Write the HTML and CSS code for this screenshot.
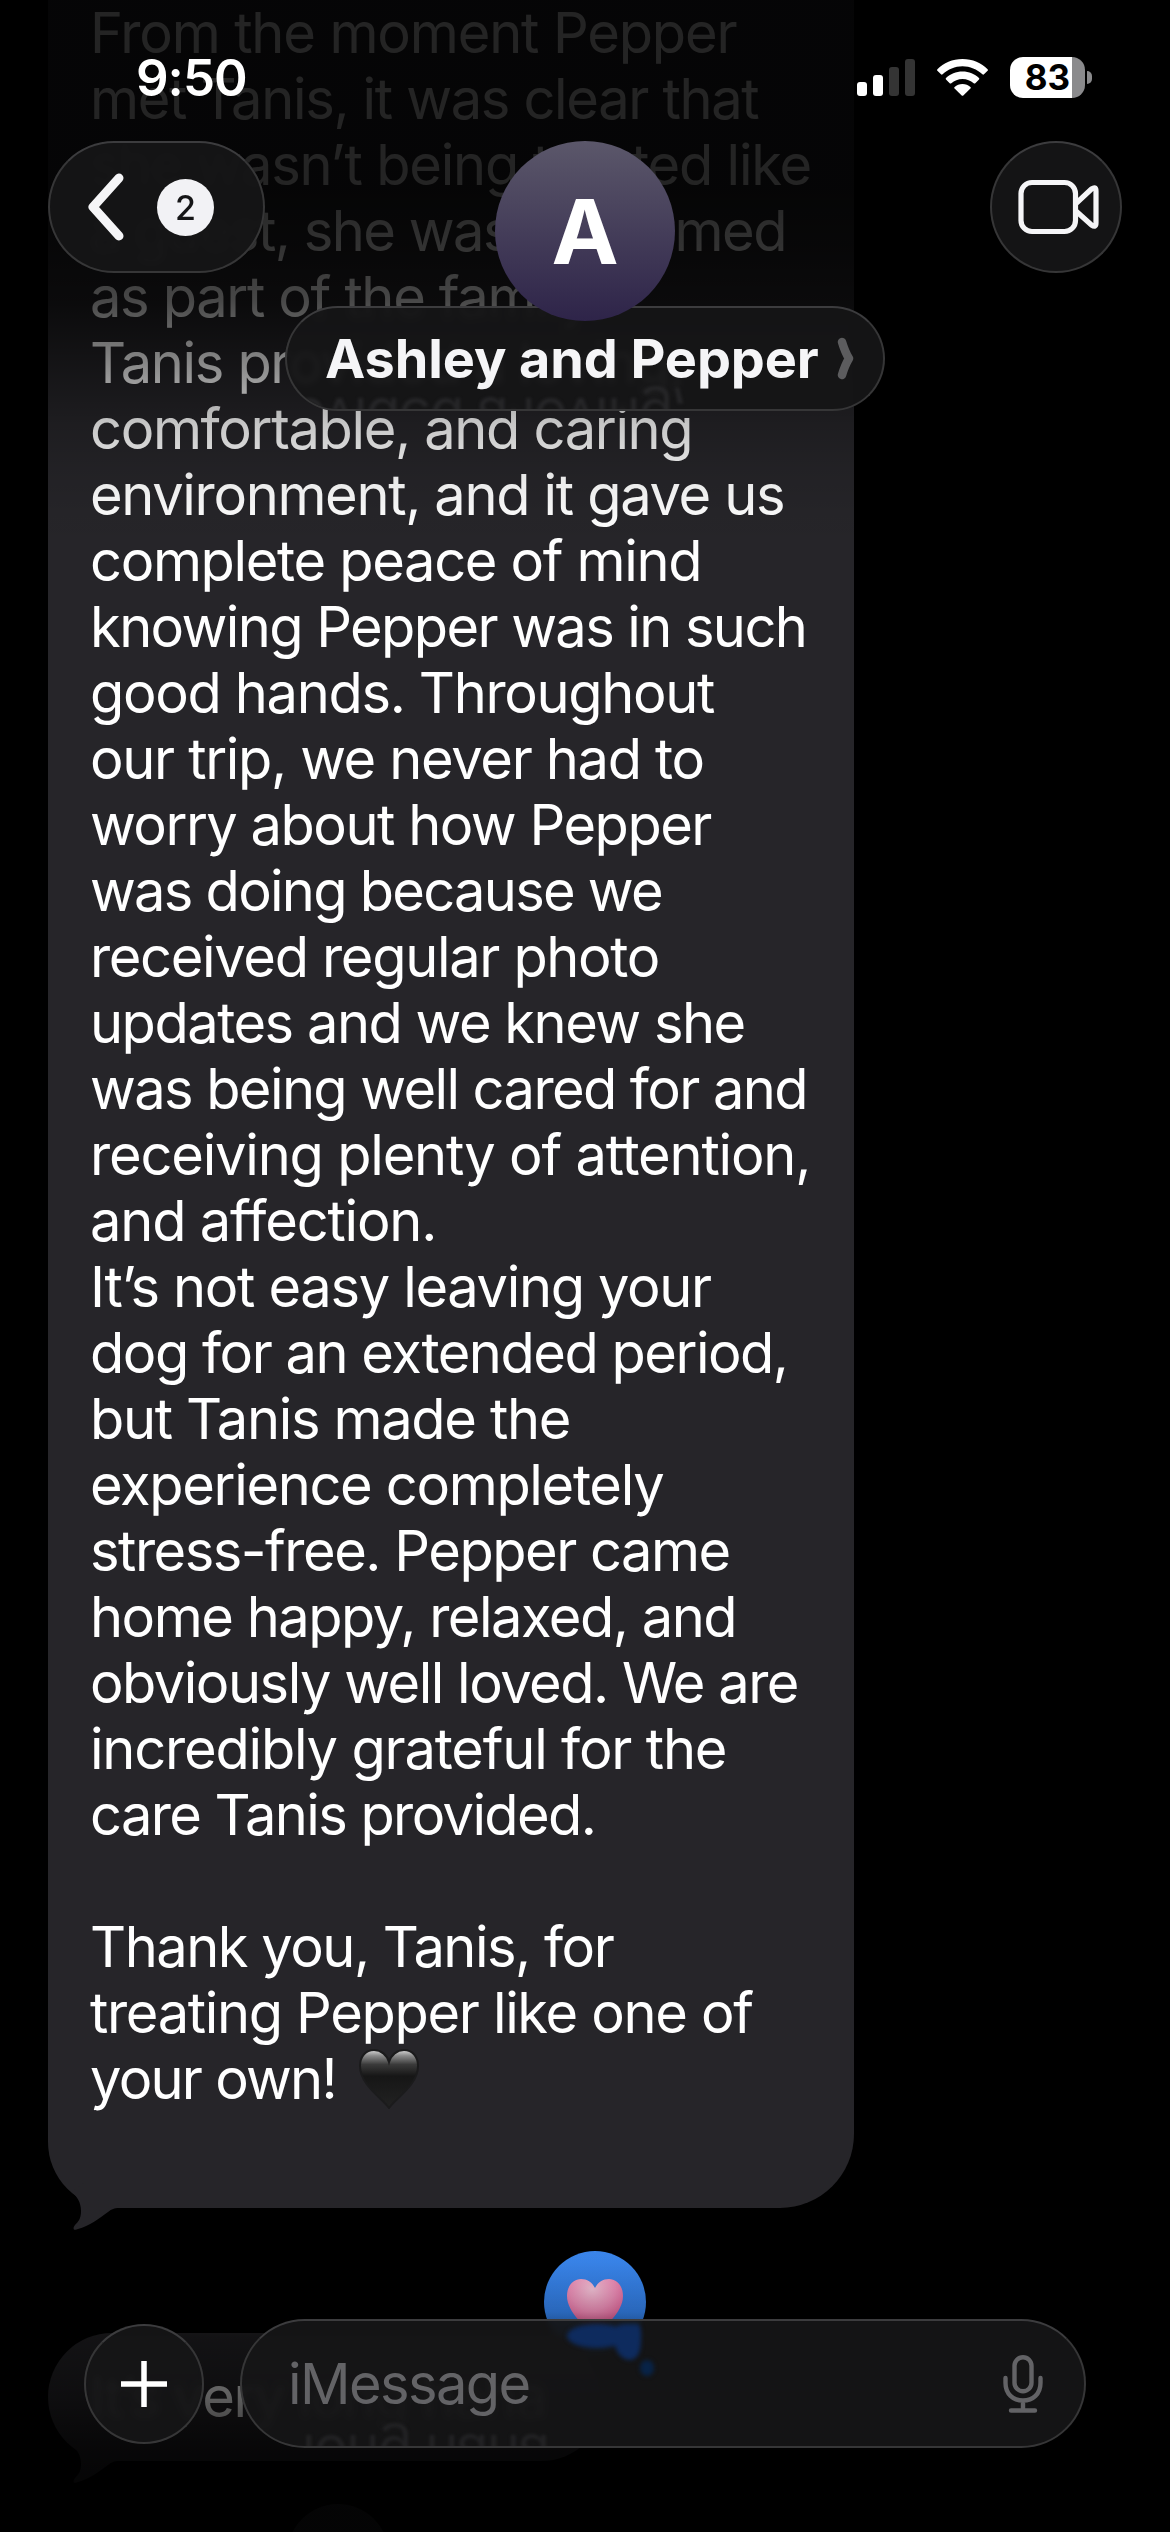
FILE: index.html
```html
<!DOCTYPE html>
<html lang="en">
<head>
<meta charset="utf-8">
<title>Messages</title>
<link rel="stylesheet" href="styles.css">
</head>
<body>
<main class="screen">
  <section class="thread">
    <article class="bubble bubble-long">
      <p class="text">
        <span class="wide">From the moment Pepper</span>
        <span>met Tanis, it was clear that</span>
        <span class="loose">she wasn’t being treated like</span>
        <span class="tight">a guest, she was welcomed</span>
        <span>as part of the family.</span>
        <span>Tanis provided a loving,</span>
        <span>comfortable, and caring</span>
        <span>environment, and it gave us</span>
        <span>complete peace of mind</span>
        <span class="tighter">knowing Pepper was in such</span>
        <span>good hands. Throughout</span>
        <span>our trip, we never had to</span>
        <span class="tight">worry about how Pepper</span>
        <span class="tightest">was doing because we</span>
        <span>received regular photo</span>
        <span class="tight">updates and we knew she</span>
        <span class="tighter">was being well cared for and</span>
        <span class="loose">receiving plenty of attention,</span>
        <span class="loose">and affection.</span>
        <span>It’s not easy leaving your</span>
        <span class="tight">dog for an extended period,</span>
        <span>but Tanis made the</span>
        <span>experience completely</span>
        <span class="tight">stress-free. Pepper came</span>
        <span class="tight">home happy, relaxed, and</span>
        <span class="tight">obviously well loved. We are</span>
        <span class="loose">incredibly grateful for the</span>
        <span class="tighter">care Tanis provided.</span>
        <span class="blank"></span>
        <span class="tight">Thank you, Tanis, for</span>
        <span>treating Pepper like one of</span>
        <span class="tightest">your own!<svg class="heart-dark" viewBox="0 0 60 60"><defs><linearGradient id="hd" x1="0" y1="0" x2="0" y2="1"><stop offset="0" stop-color="#d8d8d8"/><stop offset=".1" stop-color="#8a8a8a"/><stop offset=".25" stop-color="#3a3a3a"/><stop offset=".45" stop-color="#161616"/><stop offset="1" stop-color="#222"/></linearGradient></defs><path d="M30 59C23 49 1 36 1 17C1 7 7 1 15 1C22 1 28 6 30 13C32 6 38 1 45 1C53 1 59 7 59 17C59 36 37 49 30 59Z" fill="url(#hd)" stroke="#1b1b1c" stroke-width="2"/></svg></span>
      </p>
      <svg class="tail" viewBox="0 0 80 50"><path d="M40 0L24 12C29 17 33 22 33 31C33 39 30 42 27 45C24 49 26 51 30 49C41 46 52 38 60 32C64 29 66 28 71 28L80 28V0Z"/></svg>
    </article>
    <div class="reaction-row">
      <div class="reaction">
        <svg viewBox="0 0 56 52"><defs><radialGradient id="hp" cx=".45" cy=".2" r=".8"><stop offset="0" stop-color="#fbc9de"/><stop offset=".5" stop-color="#f594be"/><stop offset="1" stop-color="#e4508e"/></radialGradient></defs><path d="M28 52C20 50 0 34 0 17C0 7 6 0 14 0C20 0 25 3 28 9C31 3 36 0 42 0C50 0 56 7 56 17C56 34 36 50 28 52Z" fill="url(#hp)"/></svg>
      </div>
    </div>
    <article class="bubble bubble-short">
      <p class="text"><span>It’s very long haha</span></p>
      <svg class="tail" viewBox="0 0 80 50"><path d="M40 0L24 12C29 17 33 22 33 31C33 39 30 42 27 45C24 49 26 51 30 49C41 46 52 38 60 32C64 29 66 28 71 28L80 28V0Z"/></svg>
    </article>
    <div class="next-reaction"></div>
  </section>
  <div class="fade fade-top"></div>
  <div class="fade fade-bottom"></div>

  <header class="header">
    <div class="status">
      <time class="clock">9:50</time>
      <svg class="signal" viewBox="0 0 58 38"><rect y="23" width="10" height="14" rx="3" fill="#fff"/><rect x="16" y="16" width="10" height="21" rx="3" fill="#fff"/><rect x="32" y="8" width="10" height="29" rx="3" fill="#343434"/><rect x="48" width="10" height="37" rx="3" fill="#343434"/></svg>
      <svg class="wifi" viewBox="0 0 51 37" fill="#fff"><path d="M25.5 0C35.500 0 44.500 4 50.600 10.200Q51.300 11 50.600 11.800L47 15.300Q46.200 16 45.400 15.300C40 10.300 33 7.300 25.500 7.300S11 10.300 5.600 15.300Q4.800 16 4 15.300L.4 11.800Q-.3 11 .4 10.200C6.500 4 15.500 0 25.500 0Z"/><path d="M25.500 12.500C32 12.500 37.700 15 42 19Q42.700 19.800 42 20.600L38.300 24.200Q37.500 24.900 36.700 24.200C33.700 21.500 29.800 19.900 25.500 19.900S17.300 21.500 14.300 24.200Q13.500 24.900 12.700 24.200L9 20.600Q8.300 19.800 9 19C13.300 15 19 12.500 25.500 12.500Z"/><path d="M25.500 25C28.600 25 31.300 26.100 33.400 28Q34.100 28.700 33.400 29.500L26.300 36.500Q25.500 37.200 24.700 36.500L17.600 29.500Q16.900 28.700 17.600 28C19.700 26.100 22.400 25 25.500 25Z"/></svg>
      <div class="battery"><span>83</span></div>
    </div>
    <div class="nav">
      <button class="glass back"><svg viewBox="0 0 37 68"><path d="M32 5L6 34L32 63" fill="none" stroke="#f5f5f7" stroke-width="9" stroke-linecap="round" stroke-linejoin="round"/></svg><span class="count">2</span></button>
      <div class="contact">
        <div class="avatar">A</div>
        <div class="glass name"><b>Ashley and Pepper</b><svg viewBox="0 0 17 43"><path d="M5 5Q8 15 12 21.500Q8 28 5 38" fill="none" stroke="#5c5c5e" stroke-width="8.500" stroke-linecap="round" stroke-linejoin="round"/></svg></div>
      </div>
      <button class="glass video"><svg viewBox="0 0 82 56" fill="none" stroke="#f5f5f7" stroke-width="5.200" stroke-linejoin="round"><rect x="3" y="3.500" width="54.500" height="49" rx="11"/><path d="M58.500 24L73.500 10Q78 7 78 12V44Q78 49 73.500 46L58.500 32.500"/></svg></button>
    </div>
  </header>

  <footer class="composer">
    <button class="glass plus"><svg viewBox="0 0 46 46"><path d="M23 0V46M0 23H46" stroke="#fff" stroke-width="5.500" stroke-linecap="round"/></svg></button>
    <div class="glass field">
      <svg class="refraction" viewBox="0 0 100 64"><g fill="#0e2b5e"><ellipse cx="35" cy="18" rx="30" ry="12"/><path d="M52 12Q55 5 66 6H76Q80 8 79 22Q79 42 67 42Q54 40 52 22Z"/><ellipse cx="85" cy="50" rx="7" ry="8" fill="#082347"/></g></svg>
      <span class="placeholder">iMessage</span>
      <svg class="mic" viewBox="0 0 40 58" fill="none" stroke="#636366" stroke-width="4.400" stroke-linecap="round"><rect x="11.500" y="2.200" width="17" height="34" rx="8.500"/><path d="M2.500 23V28C2.500 39 10 45.500 20 45.500S37.500 39 37.500 28V23M20 46V55.500M8 55.500H32"/></svg>
    </div>
  </footer>
</main>
</body>
</html>
```
FILE: styles.css
```css
* { box-sizing: border-box; margin: 0; }
body { background: #000; font-family: Inter, "Liberation Sans", sans-serif; color: #fff; }
button { font: inherit; color: inherit; padding: 0; }
svg { display: block; flex: none; }

.screen { position: relative; width: 1170px; height: 2532px; overflow: hidden; background: #000; }

/* conversation */
.thread { display: flex; flex-direction: column; align-items: flex-start; padding-left: 48px; }
.bubble { position: relative; background: #262529; padding-left: 42px; }
.bubble-long { width: 806px; height: 2208px; border-radius: 0 0 74px 66px; }
.bubble-short { width: 557px; height: 128px; padding-top: 31px; border-radius: 64px; }
.text { font-size: 56px; line-height: 66px; letter-spacing: -1.34px; white-space: nowrap; }
.text > span { display: block; height: 66px; }
.text .wide { letter-spacing: -1.15px; }
.text .loose { letter-spacing: -1.2px; }
.text .tight { letter-spacing: -1.49px; }
.text .tighter { letter-spacing: -1.6px; }
.text .tightest { letter-spacing: -1.74px; }
.heart-dark { display: inline-block; width: 60px; height: 60px; margin-left: 23px; vertical-align: -10px; }
.tail { position: absolute; left: 0; bottom: -22px; width: 80px; height: 50px; }
.tail path { fill: #262529; }
.reaction-row { height: 125px; padding: 43px 0 0 496px; }
.reaction { width: 102px; height: 102px; padding: 28px 0 0 23px; border-radius: 50%; background: linear-gradient(#3b87ee, #2f7de6); }
.reaction svg { width: 56px; height: 52px; }
.next-reaction { width: 102px; height: 102px; margin: 43px 0 0 239px; border-radius: 50%; background: #222224; }

/* edge fades over the conversation */
.fade { position: absolute; left: 0; right: 0; }
.fade-top { top: 0; height: 560px; background: linear-gradient(rgba(0,0,0,.86) 0, rgba(0,0,0,.86) 190px, rgba(0,0,0,.8) 250px, rgba(0,0,0,.72) 300px, rgba(0,0,0,.54) 345px, rgba(0,0,0,.4) 380px, rgba(0,0,0,.22) 425px, rgba(0,0,0,.1) 470px, rgba(0,0,0,.02) 520px, transparent 560px); }
.fade-bottom { bottom: 0; height: 300px; background: linear-gradient(transparent 0, rgba(0,0,0,.03) 30px, rgba(0,0,0,.2) 80px, rgba(0,0,0,.5) 105px, rgba(0,0,0,.63) 165px, rgba(0,0,0,.8) 215px, rgba(0,0,0,.87) 260px, rgba(0,0,0,.87) 300px); }

.glass { background: rgba(21,21,22,.94); border: 2px solid #363637; border-top-color: #3c3c3e; backdrop-filter: blur(3px); }

/* status bar and navigation */
.header { position: absolute; top: 0; left: 0; width: 100%; }
.status { display: flex; align-items: flex-start; height: 141px; padding: 57px 78px 0 136px; }
.clock { font-size: 51px; font-weight: 600; line-height: 42px; letter-spacing: -1px; margin-right: auto; }
.signal { width: 58px; height: 38px; margin: 2px 22px 0 0; }
.wifi { width: 51px; height: 37px; margin: 2px 22px 0 0; }
.battery { position: relative; width: 75px; height: 41px; margin-right: 7px; border-radius: 13px; background: linear-gradient(90deg, #fff 62px, #8a8a8c 62px); color: #000; font-size: 35px; font-weight: 700; line-height: 41px; text-align: center; }
.battery::after { content: ""; position: absolute; left: 77px; top: 14px; width: 5px; height: 13px; border-radius: 0 5px 5px 0; background: #8a8a8c; }
.nav { display: flex; justify-content: space-between; align-items: flex-start; padding: 0 48px; }
.back { display: flex; align-items: center; width: 217px; height: 132px; padding-left: 37px; border-radius: 66px; }
.back svg { width: 37px; height: 68px; }
.count { width: 57px; height: 57px; margin-left: 33px; border-radius: 50%; background: #f2f2f5; color: #151516; font-size: 34px; font-weight: 500; line-height: 57px; text-align: center; }
.contact { display: flex; flex-direction: column; align-items: center; width: 600px; margin-left: 20px; margin-right: 105px; }
.avatar { position: relative; z-index: 1; width: 180px; height: 180px; border-radius: 50%; background: linear-gradient(#5b576a, #2e2449); font-size: 90px; font-weight: 700; line-height: 181px; text-align: center; }
.name { position: relative; display: flex; align-items: center; width: 600px; height: 105px; margin-top: -15px; padding-left: 38px; border-radius: 53px; overflow: hidden; }
.name b { position: relative; font-size: 54px; font-weight: 700; letter-spacing: -.1px; width: 512px; color: #f5f5f7; white-space: nowrap; }
.name svg { width: 17px; height: 43px; }
.video { display: flex; align-items: center; justify-content: center; width: 132px; height: 132px; padding-left: 5px; border-radius: 50%; }
.video svg { width: 82px; height: 56px; }

/* message composer */
.composer { position: absolute; left: 84px; top: 2319px; display: flex; align-items: center; gap: 36px; }
.plus { display: flex; align-items: center; justify-content: center; width: 120px; height: 120px; border-radius: 50%; }
.plus svg { width: 46px; height: 46px; overflow: hidden; }
.field { position: relative; display: flex; align-items: center; justify-content: space-between; width: 846px; height: 129px; padding: 0 41px 0 46px; border-radius: 65px; overflow: hidden; }
.placeholder { position: relative; font-size: 56px; letter-spacing: -1.6px; color: #636366; }
.mic { width: 40px; height: 58px; }
.refraction { position: absolute; left: 320px; top: -3px; width: 100px; height: 64px; filter: blur(2px); }

/* mirrored message text caught in the lower rim of the glass */
.name::before, .field::before { position: absolute; font-size: 56px; line-height: 66px; letter-spacing: -1.4px; white-space: nowrap; transform: scaleY(-1); filter: blur(1.5px); }
.name::before { content: "provided a loving,"; left: -46px; bottom: -42px; color: #262628; }
.field::before { content: "long haha"; left: 60px; bottom: -42px; color: #222224; }
```
